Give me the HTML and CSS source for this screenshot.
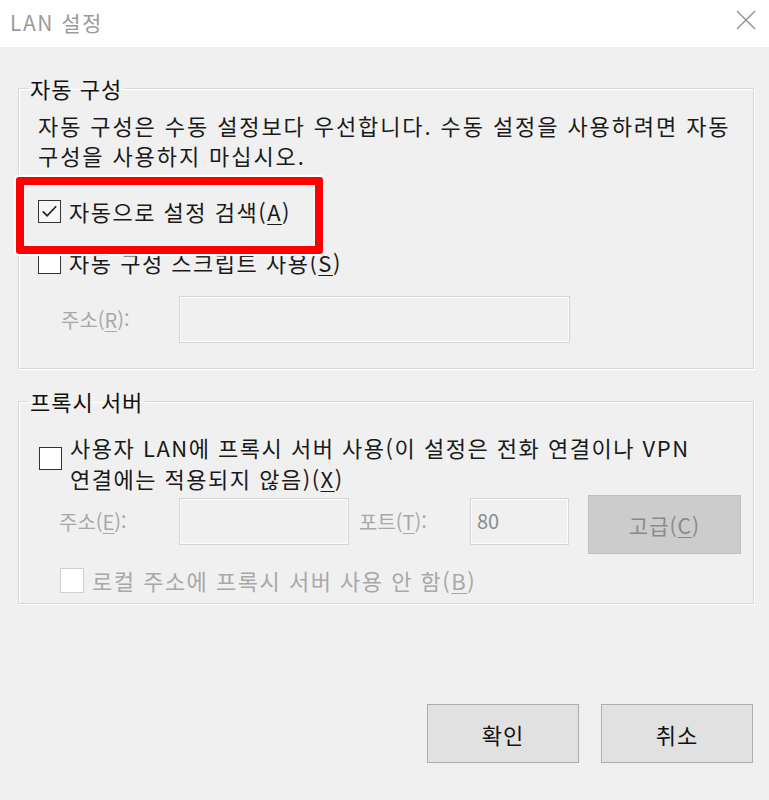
FILE: index.html
```html
<!DOCTYPE html>
<html lang="ko">
<head>
    <meta charset="UTF-8">
    <meta name="viewport" content="width=device-width, initial-scale=1.0">
    <title>LAN 설정</title>
    <link rel="stylesheet" href="styles.css">
</head>
<body>
    <div class="titlebar">
        <span class="title">LAN 설정</span>
        <svg class="close" width="20" height="20" viewBox="0 0 20 20">
            <path d="M1 1 L19 19 M19 1 L1 19" stroke="#8a8a8a" stroke-width="1.2" fill="none"/>
        </svg>
    </div>

    <div class="panel">
        <!-- 자동 구성 -->
        <fieldset class="group group-auto">
            <legend>자동 구성</legend>
            <p class="desc">자동 구성은 수동 설정보다 우선합니다. 수동 설정을 사용하려면 자동<br>구성을 사용하지 마십시오.</p>
            <div class="check-row first">
                <span class="box checked">
                    <svg width="22" height="22" viewBox="0 0 22 22">
                        <path d="M4 11.5 L8.5 16 L18 6" stroke="#222" stroke-width="1.8" fill="none"/>
                    </svg>
                </span>
                <span class="label">자동으로 설정 검색(<u>A</u>)</span>
            </div>
            <div class="check-row second">
                <span class="box"></span>
                <span class="label">자동 구성 스크립트 사용(<u>S</u>)</span>
            </div>
            <div class="field-row">
                <span class="field-label">주소(<u>R</u>):</span>
                <span class="input wide"></span>
            </div>
        </fieldset>

        <!-- 프록시 서버 -->
        <fieldset class="group group-proxy">
            <legend>프록시 서버</legend>
            <div class="check-row proxy">
                <span class="box"></span>
                <span class="label">사용자 LAN에 프록시 서버 사용(이 설정은 전화 연결이나 VPN<br>연결에는 적용되지 않음)(<u>X</u>)</span>
            </div>
            <div class="field-row proxy-fields">
                <span class="field-label addr">주소(<u>E</u>):</span>
                <span class="input addr-input"></span>
                <span class="field-label port">포트(<u>T</u>):</span>
                <span class="input port-input">80</span>
                <button class="btn advanced" disabled>고급(<u>C</u>)</button>
            </div>
            <div class="check-row local">
                <span class="box disabled"></span>
                <span class="label muted">로컬 주소에 프록시 서버 사용 안 함(<u>B</u>)</span>
            </div>
        </fieldset>

        <div class="actions">
            <button class="btn">확인</button>
            <button class="btn">취소</button>
        </div>
    </div>

    <div class="highlight"></div>
</body>
</html>
```

FILE: styles.css
```css
body {
    margin: 0;
    width: 769px;
    height: 800px;
    background-color: #f0f0f0;
    font-family: "Noto Sans CJK KR", "Noto Sans", sans-serif;
    color: #1a1a1a;
    overflow: hidden;
    position: relative;
}

.titlebar {
    height: 47px;
    background: #fff;
    display: flex;
    align-items: center;
    justify-content: space-between;
    padding: 0 13px 0 10px;
}

.title {
    font-size: 21px;
    letter-spacing: 1.5px;
    color: #9a9a9a;
    margin-top: -4px;
}

.close {
    margin-top: -8px;
}

.panel {
    padding: 29px 15px 0 18px;
}

.group {
    margin: 0;
    padding: 0 0 0 19px;
    border: 1px solid #d9d9d9;
    box-shadow: inset 1px 1px 0 #fff, 1px 1px 0 #fff;
}

.group legend {
    font-size: 22px;
    line-height: 24px;
    letter-spacing: 1px;
    padding: 0 2px;
    margin-left: -10px;
    color: #111;
}

.group-auto {
    padding-bottom: 25px;
}

.group-proxy {
    margin-top: 20px;
    padding-bottom: 10px;
}

.desc {
    margin: 10px 0 0;
    font-size: 22px;
    line-height: 30px;
    letter-spacing: 1.9px;
}

.check-row {
    display: flex;
    align-items: center;
    gap: 8px;
    font-size: 22px;
    line-height: 30px;
    letter-spacing: 1.5px;
}

.check-row.first {
    margin-top: 26px;
}

.check-row.second {
    margin-top: 21px;
}

.check-row.proxy {
    margin-top: 19px;
    align-items: flex-start;
    line-height: 31px;
}

.check-row.proxy .box {
    margin-top: 15px;
    margin-left: 1px;
}

.check-row.local {
    margin-top: 13px;
    padding-left: 22px;
    line-height: 26px;
}

.box {
    width: 21px;
    height: 21px;
    flex: none;
    border: 1.5px solid #333;
    background: #fff;
    display: flex;
    align-items: center;
    justify-content: center;
}

.box.checked {
    background: #f7f7f7;
}

.box.disabled {
    border-color: #d0d0d0;
    width: 22px;
    height: 23px;
}

.muted {
    color: #a8a8a8;
}

u {
    text-underline-offset: 3px;
    text-decoration-thickness: 1px;
}

.field-row {
    display: flex;
    align-items: center;
    margin-top: 19px;
    padding-left: 23px;
    font-size: 20px;
    color: #a8a8a8;
}

.field-label {
    width: 118px;
    flex: none;
}

.input {
    border: 1px solid #d5d5d5;
    box-shadow: inset 0 0 0 1px #fbfbfb;
    background: #f0f0f0;
    box-sizing: border-box;
    height: 47px;
}

.input.wide {
    width: 391px;
}

.proxy-fields {
    margin-top: 1px;
    padding-left: 21px;
    align-items: flex-start;
}

.proxy-fields .field-label,
.proxy-fields .input {
    margin-top: 3px;
}

.proxy-fields .field-label {
    line-height: 47px;
}

.field-label.addr {
    width: 120px;
}

.field-label.port {
    width: 111px;
    margin-left: 10px;
}

.addr-input {
    width: 170px;
}

.port-input {
    width: 99px;
    padding-left: 6px;
    line-height: 43px;
    color: #8c8c8c;
}

.btn {
    font-family: inherit;
    font-size: 22px;
    letter-spacing: 1px;
    color: #111;
    background: #e1e1e1;
    border: 1.5px solid #adadad;
    height: 59px;
    width: 152px;
    padding: 0;
}

.btn.advanced {
    margin-left: 19px;
    width: 153px;
    background: #cccccc;
    border-color: #bfbfbf;
    color: #8a8a8a;
    font-size: 21px;
}

.actions {
    display: flex;
    justify-content: flex-end;
    gap: 22px;
    margin-top: 100px;
    padding-right: 1px;
}

/* 강조 표시 */
.highlight {
    position: absolute;
    left: 16px;
    top: 177px;
    width: 291px;
    height: 61px;
    border: 8px solid #ff0000;
    border-radius: 3px;
    box-shadow: 0 0 1px 2px #fff, inset 0 0 1px 1px #fafafa;
}
```
